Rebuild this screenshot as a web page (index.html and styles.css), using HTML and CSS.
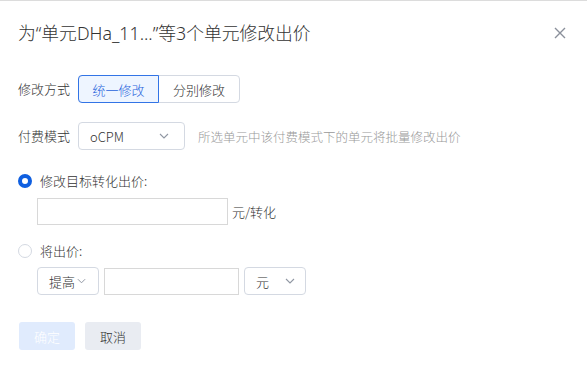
FILE: index.html
```html
<!DOCTYPE html>
<html lang="zh">
<head>
<meta charset="utf-8">
<link rel="stylesheet" href="styles.css">
</head>
<body>
<div class="dialog">
  <div class="header">
    <div class="title">为“单元DHa_11...”等3个单元修改出价</div>
    <svg class="close" width="12" height="12" viewBox="0 0 12 12"><path d="M1 1L11 11M11 1L1 11" stroke="#8a909b" stroke-width="1.4" fill="none"/></svg>
  </div>
  <div class="row">
    <div class="label">修改方式</div>
    <div class="seg">
      <div class="seg-item active">统一修改</div>
      <div class="seg-item">分别修改</div>
    </div>
  </div>
  <div class="row row2">
    <div class="label">付费模式</div>
    <div class="select w106"><span>oCPM</span><svg class="chev" width="10" height="6" viewBox="0 0 10 6"><path d="M1 1L5 5L9 1" stroke="#9097a3" stroke-width="1.1" fill="none"/></svg></div>
    <div class="hint">所选单元中该付费模式下的单元将批量修改出价</div>
  </div>
  <div class="radio-line r1">
    <span class="radio on"></span><span class="rtext">修改目标转化出价:</span>
  </div>
  <div class="sub">
    <div class="input w191"></div><span class="unit">元/转化</span>
  </div>
  <div class="radio-line r2">
    <span class="radio"></span><span class="rtext">将出价:</span>
  </div>
  <div class="sub">
    <div class="select w62 small"><span>提高</span><svg class="chev2" width="9" height="6" viewBox="0 0 10 6"><path d="M1 1L5 5L9 1" stroke="#9097a3" stroke-width="1.1" fill="none"/></svg></div>
    <div class="input w134 gap5"></div>
    <div class="select w62 gap6 unitsel"><span>元</span><svg class="chev" width="10" height="6" viewBox="0 0 10 6"><path d="M1 1L5 5L9 1" stroke="#9097a3" stroke-width="1.1" fill="none"/></svg></div>
  </div>
  <div class="footer">
    <div class="btn ok">确定</div>
    <div class="btn cancel">取消</div>
  </div>
</div>
</body>
</html>
```
FILE: styles.css
```css
html, body {
  margin: 0;
  padding: 0;
  background: #fff;
}
body {
  font-family: "Noto Sans CJK SC", "Noto Sans", sans-serif;
  color: #333;
  font-size: 13px;
  font-weight: 300;
  border-top: 1px solid #dcdcdc;
  height: 369px;
}
.dialog {
  padding: 0 18px;
}
.header {
  display: flex;
  justify-content: space-between;
  align-items: center;
  padding-top: 20px;
  height: 24px;
}
.title {
  font-family: "Noto Sans", "Noto Sans CJK SC", sans-serif;
  font-size: 17.8px;
  line-height: 24px;
  color: #333;
}
.close {
  margin-right: 3px;
}
.row {
  display: flex;
  align-items: center;
  height: 28px;
  margin-top: 30px;
}
.row2 {
  margin-top: 19px;
}
.label {
  width: 60px;
  color: #333;
  line-height: 20px;
}
.seg {
  display: flex;
  height: 28px;
  border: 1px solid #d4d9e2;
  border-radius: 4px;
  box-sizing: border-box;
}
.seg-item {
  width: 80px;
  display: flex;
  align-items: center;
  justify-content: center;
  color: #333;
  box-sizing: border-box;
}
.seg-item.active {
  color: #1f63dc;
  background: #eef5ff;
  border: 1px solid #3274e6;
  margin: -1px 0 -1px -1px;
  height: 28px;
  width: 81px;
  border-radius: 4px 0 0 4px;
}
.select {
  height: 28px;
  box-sizing: border-box;
  border: 1px solid #d4d9e2;
  border-radius: 4px;
  display: flex;
  align-items: center;
  justify-content: space-between;
  padding: 0 15px 0 11px;
  color: #333;
}
.w106 { width: 107px; }
.w62 { width: 62px; }
.small {
  padding: 0 4px 0 11px;
  justify-content: flex-start;
}
.chev2 { margin-left: 2px; }
.unitsel { padding: 0 10px 0 11px; }
.hint {
  margin-left: 13px;
  color: #999;
  font-size: 12.5px;
}
.radio-line {
  display: flex;
  align-items: center;
  line-height: 20px;
}
.r1 { margin-top: 21px; }
.r2 { margin-top: 16px; }
.radio {
  width: 14px;
  height: 14px;
  box-sizing: border-box;
  border-radius: 50%;
  border: 1px solid #d4d9e2;
  margin-left: 0;
  margin-right: 8px;
}
.radio.on {
  border: 4px solid #0f5fe0;
}
.rtext {
  color: #333;
}
.sub {
  display: flex;
  align-items: center;
  margin-top: 6px;
  padding-left: 19px;
  height: 28px;
}
.input {
  height: 27px;
  box-sizing: border-box;
  border: 1px solid #d8d8d8;
}
.w191 { width: 191px; }
.w134 { width: 135px; }
.gap5 { margin-left: 5px; }
.gap6 { margin-left: 5px; }
.unit {
  margin-left: 4px;
  color: #333;
}
.footer {
  display: flex;
  margin-top: 27px;
  padding-left: 1px;
}
.btn {
  width: 56px;
  height: 28px;
  border-radius: 3px;
  display: flex;
  align-items: center;
  justify-content: center;
}
.ok {
  background: #e0ebfd;
  color: #fff;
}
.cancel {
  background: #e9ecf2;
  color: #333;
  margin-left: 10px;
}
```
